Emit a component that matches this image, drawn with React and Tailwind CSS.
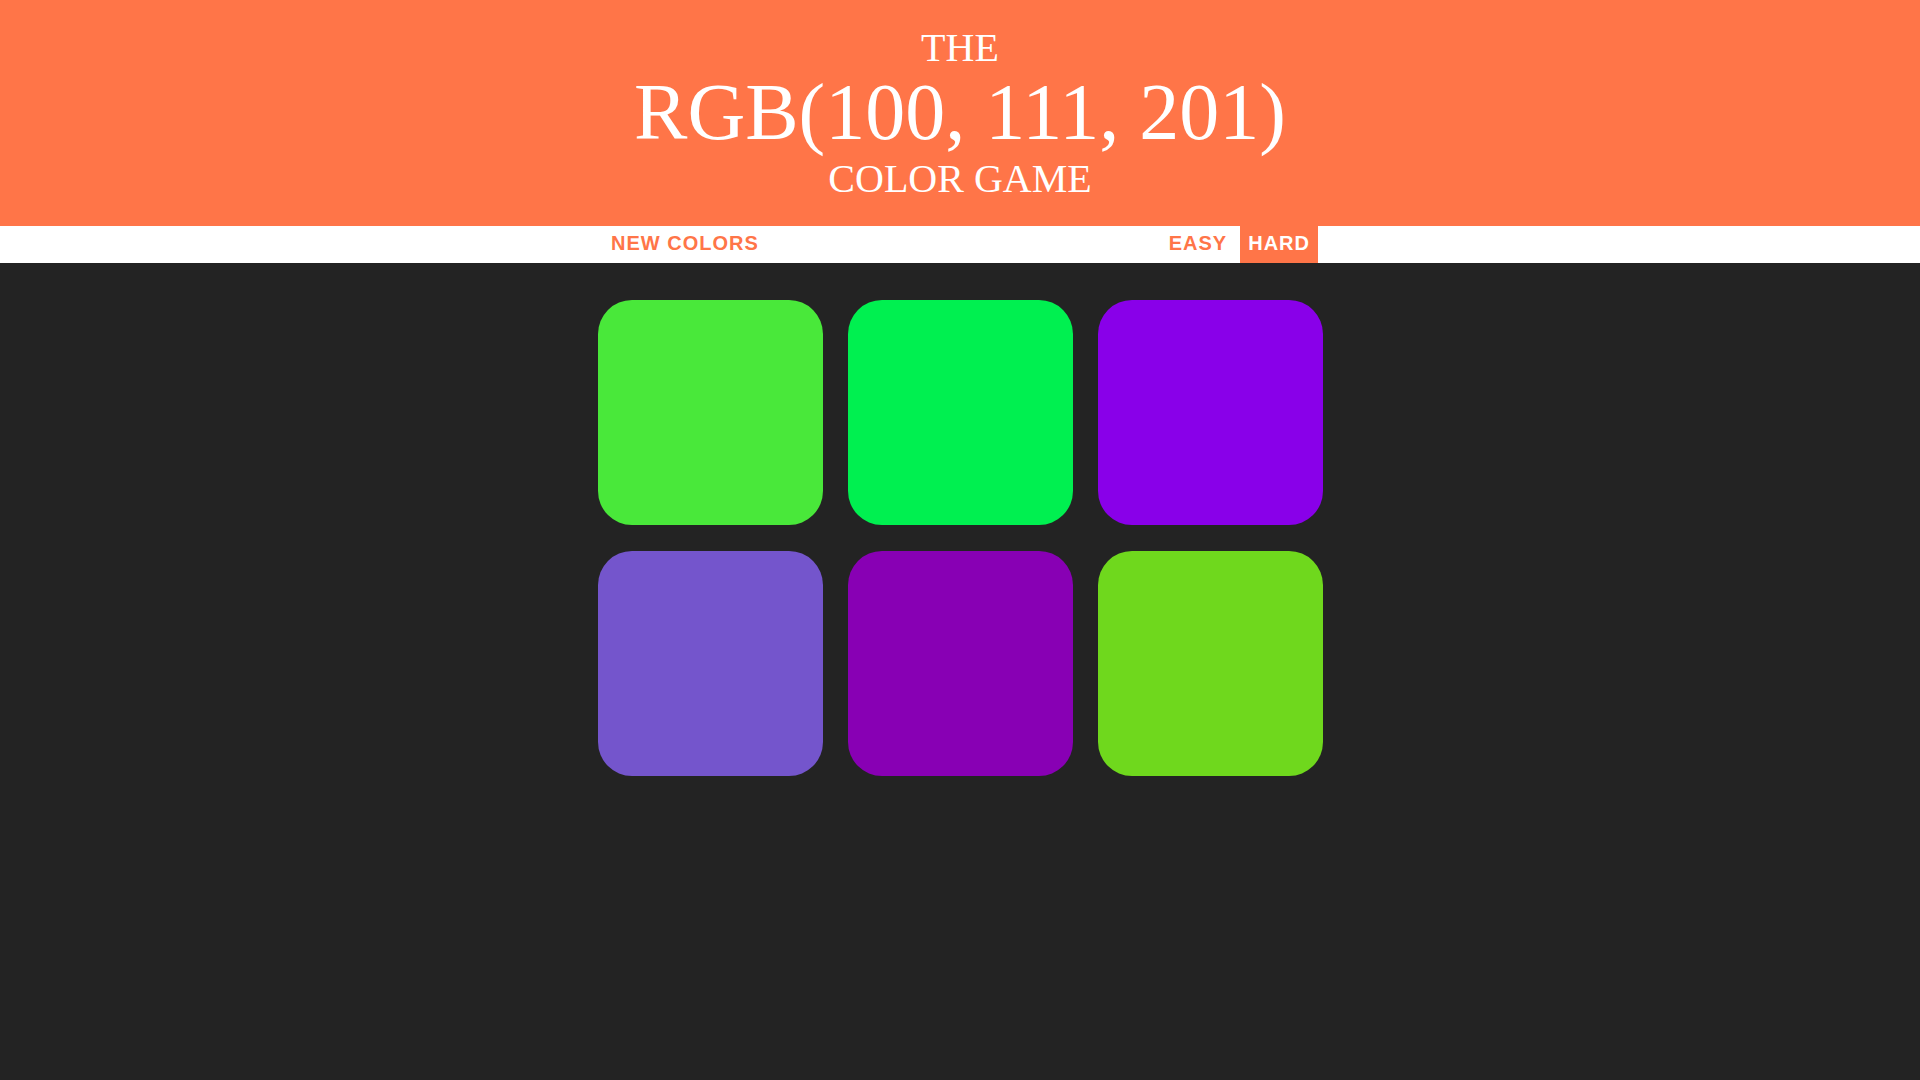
import { useState } from 'react';

const squares = ['#49e83a', '#00f050', '#8900e9', '#7455cc', '#8800b4', '#6fd81d'];

export default function App() {
  const [mode, setMode] = useState('hard');

  return (
    <div className="min-h-screen bg-[#232323]">
      {/* Title */}
      <header className="bg-[#ff7548] text-white text-center pt-[28px] pb-[27px] font-['Liberation_Serif',serif] uppercase">
        <div className="text-[40px] leading-[40px]">The</div>
        <div className="text-[80px] leading-[80px] mt-[4px]">RGB(100, 111, 201)</div>
        <div className="text-[40px] leading-[40px] mt-[7px]">Color Game</div>
      </header>

      {/* Stripe */}
      <div className="bg-white h-[37px] font-['Liberation_Sans',Arial,sans-serif]">
        <div className="w-[750px] mx-auto h-full flex justify-between">
          <button className="ml-[18px] px-2 pb-[3px] h-full text-[20px] font-bold tracking-[1px] text-[#ff7548] uppercase">
            New Colors
          </button>
          <div className="mr-[17px] h-full flex gap-[5px]">
            <button
              onClick={() => setMode('easy')}
              className={`px-2 pb-[3px] h-full text-[20px] font-bold tracking-[1px] uppercase ${
                mode === 'easy' ? 'bg-[#ff7548] text-white' : 'bg-white text-[#ff7548]'
              }`}
            >
              Easy
            </button>
            <button
              onClick={() => setMode('hard')}
              className={`px-2 pb-[3px] h-full text-[20px] font-bold tracking-[1px] uppercase ${
                mode === 'hard' ? 'bg-[#ff7548] text-white' : 'bg-white text-[#ff7548]'
              }`}
            >
              Hard
            </button>
          </div>
        </div>
      </div>

      {/* Squares */}
      <main className="pt-[37px]">
        <div className="w-[725px] mx-auto grid grid-cols-3 gap-x-[25px] gap-y-[26px]">
          {squares.map((c) => (
            <div key={c} className="h-[225px] rounded-[34px]" style={{ background: c }} />
          ))}
        </div>
      </main>
    </div>
  );
}
